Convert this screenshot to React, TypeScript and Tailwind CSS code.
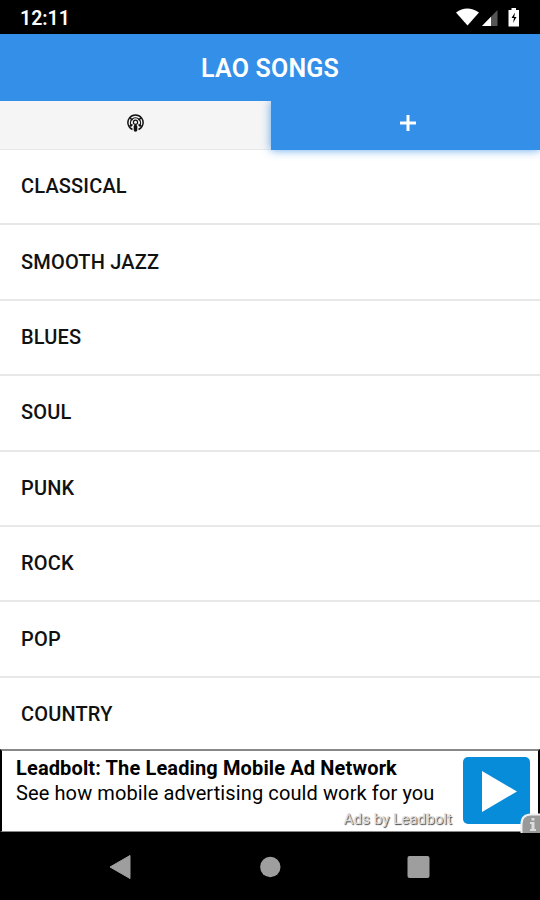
import React from "react";

const genres = ["CLASSICAL", "SMOOTH JAZZ", "BLUES", "SOUL", "PUNK", "ROCK", "POP", "COUNTRY"];

function StatusBar() {
  return (
    <div className="flex h-[34px] shrink-0 items-center justify-between bg-black pl-[20px] pr-[20px]">
      <span className="pt-[3px] text-[19.5px] font-semibold leading-none text-white">12:11</span>
      <svg className="h-[34px] w-[66px]" viewBox="454 0 66 34">
        <path d="M456 12.500Q467 4.500 479 12.500L467.500 25.500Z" fill="#fff" />
        <path d="M482 26L497.500 10V26Z" fill="#555" />
        <path d="M482 26L491 16.700V26Z" fill="#fff" />
        <path d="M508.500 10H511.500V8H516V10H519V26.500H508.500Z" fill="#fff" />
        <path d="M515 12.500L511.500 18H514L513 23L516.500 17H514.200Z" fill="#000" />
      </svg>
    </div>
  );
}

function PodcastIcon() {
  return (
    <svg className="h-[18px] w-[17px]" viewBox="0 0 17 18" fill="none" stroke="#111">
      <path d="M5.500 15.500A7.600 7.600 0 1 1 11.500 15.500" strokeWidth="1.500" />
      <path d="M4.800 12.200A5 5 0 1 1 12.200 12.200" strokeWidth="1.300" />
      <circle cx="8.500" cy="8.300" r="2.100" strokeWidth="1.200" />
      <path d="M2.800 3.800L5.500 6M14.200 3.800L11.500 6M2.600 12.300L5.500 10.500M14.400 12.300L11.500 10.500" strokeWidth="1.500" />
      <path d="M8.500 12.500V16" strokeWidth="3.600" strokeLinecap="round" />
    </svg>
  );
}

function Tabs() {
  return (
    <div className="flex h-[49px] shrink-0">
      <div className="flex w-[271px] items-center justify-center border-b border-[#e8e8e8] bg-[#f5f5f5] pb-[4px]">
        <PodcastIcon />
      </div>
      <div className="relative flex flex-1 items-center justify-center bg-[#338fe8] pb-[5px] pl-[5px] shadow-[0_0_9px_rgba(51,143,232,0.8)] [clip-path:inset(0_0_-12px_-12px)]">
        <svg className="size-[16px]" viewBox="0 0 16 16">
          <path d="M8 0V16M0 8H16" stroke="#fff" strokeWidth="3" />
        </svg>
      </div>
    </div>
  );
}

function AdBanner() {
  return (
    <div className="relative flex h-[83px] shrink-0 border-b border-l-2 border-r-2 border-t-2 border-b-[#888] border-l-black border-r-black border-t-[#888] bg-white">
      <div className="flex flex-1 flex-col whitespace-nowrap pl-[14px] pt-[5px] text-black">
        <span className="text-[20px] font-bold leading-[25px] tracking-[0.13px]">Leadbolt: The Leading Mobile Ad Network</span>
        <span className="text-[20px] leading-[25px] tracking-[0.11px]">See how mobile advertising could work for you</span>
        <span className="w-[436px] text-right text-[15.200px] leading-[26px] text-[#ddd] [text-shadow:1px_1px_1px_#444]">Ads by Leadbolt</span>
      </div>
      <div className="mr-[8px] mt-[6px] flex size-[67px] shrink-0 rounded-[5px] bg-[#078cda]">
        <svg className="size-full" viewBox="0 0 67 67">
          <path d="M19 14V55L54 34.500Z" fill="#fff" />
        </svg>
      </div>
      <svg className="absolute -bottom-[2px] -right-[2px] h-[20px] w-[20px]" viewBox="0 0 20 20">
        <path d="M1.500 20V11Q1.500 1.500 11 1.500H20V20Z" fill="#999" />
        <path d="M1.500 20V11Q1.500 1.500 11 1.500H20" fill="none" stroke="#f0f0f0" strokeWidth="2" />
        <path d="M11.500 5H14.500V7.500H11.500ZM10 9H14.500V16H16V18H10V16H11.500V11H10Z" fill="#ddd" />
      </svg>
    </div>
  );
}

function NavBar() {
  return (
    <div className="flex flex-1 bg-black">
      <svg className="h-[68px] w-full" viewBox="0 0 540 68">
        <path d="M110 35L130 23.500V46.500Z" fill="#9e9e9e" stroke="#9e9e9e" strokeWidth="1" strokeLinejoin="round" />
        <circle cx="270.300" cy="35" r="10.200" fill="#9e9e9e" />
        <rect x="407.500" y="24" width="22" height="22" rx="2" fill="#9e9e9e" />
      </svg>
    </div>
  );
}

export default function App() {
  return (
    <div className="flex h-[900px] w-[540px] flex-col overflow-hidden bg-white font-['Roboto',sans-serif]">
      <StatusBar />
      <header className="flex h-[67px] shrink-0 items-center justify-center bg-[#338fe8] pt-px">
        <h1 className="text-[25px] font-semibold leading-none tracking-[0.2px] text-white">LAO SONGS</h1>
      </header>
      <Tabs />
      <ul className="h-[599px] shrink-0 overflow-hidden">
        {genres.map((genre) => (
          <li key={genre} className="flex h-[75.4px] items-center border-b-2 border-[#e8e8e8] pb-[1px] pl-[21px] text-[20px] font-medium leading-none tracking-[0.17px] text-[#111]">
            {genre}
          </li>
        ))}
      </ul>
      <AdBanner />
      <NavBar />
    </div>
  );
}
